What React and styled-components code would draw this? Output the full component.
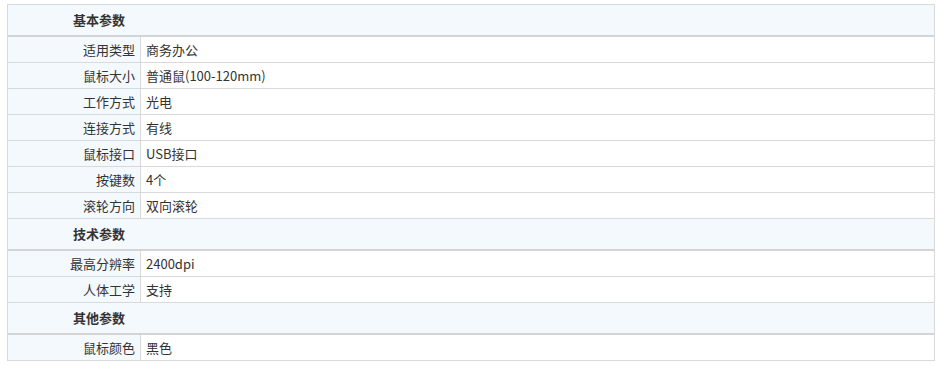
import React from "react";
import styled, { createGlobalStyle } from "styled-components";

const GlobalStyle = createGlobalStyle`
  body {
    margin: 0;
    background: #fff;
    font-family: "Noto Sans CJK SC", "Microsoft YaHei", sans-serif;
    font-size: 13px;
    color: #333;
  }
`;

const specs = [
  {
    title: "基本参数",
    rows: [
      ["适用类型", "商务办公"],
      ["鼠标大小", "普通鼠(100-120mm)"],
      ["工作方式", "光电"],
      ["连接方式", "有线"],
      ["鼠标接口", "USB接口"],
      ["按键数", "4个"],
      ["滚轮方向", "双向滚轮"],
    ],
  },
  {
    title: "技术参数",
    rows: [
      ["最高分辨率", "2400dpi"],
      ["人体工学", "支持"],
    ],
  },
  {
    title: "其他参数",
    rows: [["鼠标颜色", "黑色"]],
  },
];

function App() {
  return (
    <Page>
      <GlobalStyle />
      <SpecTable>
        {specs.map((group) => (
          <React.Fragment key={group.title}>
            <GroupHead>{group.title}</GroupHead>
            {group.rows.map(([label, value]) => (
              <Row key={label}>
                <Label>{label}</Label>
                <Value>{value}</Value>
              </Row>
            ))}
          </React.Fragment>
        ))}
      </SpecTable>
    </Page>
  );
}

const Page = styled.div`
  padding: 4px 7px 0 7px;
`;

const SpecTable = styled.div`
  width: 926px;
  border: 1px solid #d9d9d9;
  border-bottom: none;
`;

const GroupHead = styled.div`
  height: 30px;
  line-height: 30px;
  padding-left: 65px;
  background: #f4f9fe;
  border-bottom: 2px solid #d4d4d4;
  font-weight: bold;
  color: #333;
`;

const Row = styled.div`
  display: flex;
  height: 25px;
  border-bottom: 1px solid #d9d9d9;
`;

const Label = styled.div`
  width: 127px;
  flex: none;
  padding-right: 5px;
  text-align: right;
  line-height: 25px;
  background: #f4f9fe;
  border-right: 1px solid #d9d9d9;
`;

const Value = styled.div`
  flex: 1;
  padding-left: 5px;
  line-height: 25px;
  background: #fff;
`;

export default App;
